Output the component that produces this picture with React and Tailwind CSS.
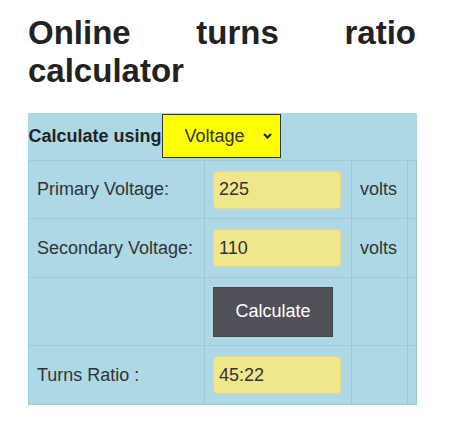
import React, { useState } from "react";

const cell = "border border-[#9ccad8] px-2 align-middle";

export default function App() {
  const [mode, setMode] = useState("voltage");
  const [primary, setPrimary] = useState("225");
  const [secondary, setSecondary] = useState("110");
  const [ratio, setRatio] = useState("45:22");

  const gcd = (a, b) => (b ? gcd(b, a % b) : a);

  const calculate = () => {
    const p = parseInt(primary, 10);
    const s = parseInt(secondary, 10);
    if (!p || !s) return;
    const g = gcd(p, s);
    setRatio(`${p / g}:${s / g}`);
  };

  return (
    <div className="min-h-screen bg-white font-['Liberation_Sans',Arial,sans-serif] text-[18px] text-[#333]">
      <div className="ml-[28px] w-[388px] pt-[14px]">
        <h1 className="text-[33px] leading-[38px] font-bold text-justify text-[#222] mb-[23px]">
          Online turns ratio calculator
        </h1>

        <table className="w-[388px] table-fixed border-collapse bg-[#add8e6]">
          <colgroup>
            <col className="w-[176px]" />
            <col className="w-[147px]" />
            <col className="w-[56px]" />
            <col className="w-[9px]" />
          </colgroup>
          <tbody>
            <tr>
              <td colSpan={4} className="border-b border-[#9ccad8] p-0 pt-[1px] pb-[2px] align-middle">
                <div className="flex items-center">
                  <span className="font-bold text-[#222]">Calculate using</span>
                  <div className="relative">
                    <select
                      value={mode}
                      onChange={(e) => setMode(e.target.value)}
                      className="appearance-none h-[44px] w-[119px] bg-[#ffff00] border border-[#333] pl-[22px] text-[#333] outline-none"
                    >
                      <option value="voltage">Voltage</option>
                      <option value="current">Current</option>
                    </select>
                    <svg
                      className="absolute right-[9px] top-[19px] pointer-events-none"
                      width="9"
                      height="6"
                      viewBox="0 0 9 6"
                    >
                      <path d="M1 1l3.5 3.5L8 1" fill="none" stroke="#222" strokeWidth="2" />
                    </svg>
                  </div>
                </div>
              </td>
            </tr>
            <tr className="h-[58px]">
              <td className={cell}>Primary Voltage:</td>
              <td className={cell}>
                <input
                  value={primary}
                  onChange={(e) => setPrimary(e.target.value)}
                  className="h-[38px] w-[128px] rounded-[4px] border border-[#e4d88a] bg-[#f0e68c] px-[5px] outline-none"
                />
              </td>
              <td className={cell}>volts</td>
              <td className={cell}></td>
            </tr>
            <tr className="h-[59px]">
              <td className={cell}>Secondary Voltage:</td>
              <td className={cell}>
                <input
                  value={secondary}
                  onChange={(e) => setSecondary(e.target.value)}
                  className="h-[38px] w-[128px] rounded-[4px] border border-[#e4d88a] bg-[#f0e68c] px-[5px] outline-none"
                />
              </td>
              <td className={cell}>volts</td>
              <td className={cell}></td>
            </tr>
            <tr className="h-[68px]">
              <td className={cell}></td>
              <td className={cell}>
                <button
                  type="button"
                  onClick={calculate}
                  className="h-[50px] w-[120px] border border-[#45454c] bg-[#515159] text-white"
                >
                  Calculate
                </button>
              </td>
              <td className={cell}></td>
              <td className={cell}></td>
            </tr>
            <tr className="h-[59px]">
              <td className={cell}>Turns Ratio :</td>
              <td className={cell}>
                <input
                  value={ratio}
                  readOnly
                  className="h-[38px] w-[128px] rounded-[4px] border border-[#e4d88a] bg-[#f0e68c] px-[5px] outline-none"
                />
              </td>
              <td className={cell}></td>
              <td className={cell}></td>
            </tr>
          </tbody>
        </table>
      </div>
    </div>
  );
}
